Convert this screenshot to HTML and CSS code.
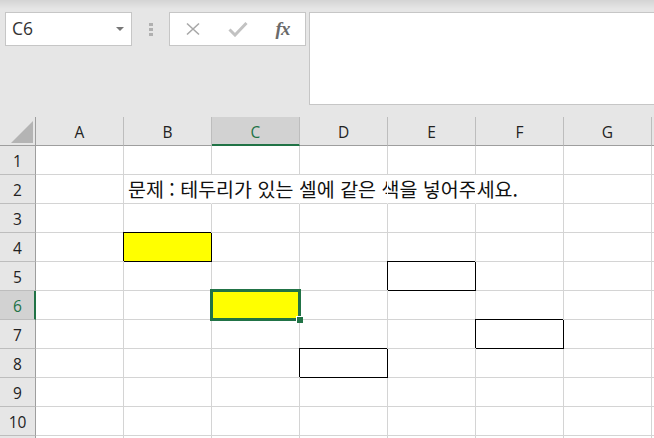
FILE: index.html
```html
<!DOCTYPE html>
<html lang="ko">
<head>
<meta charset="utf-8">
<title>Excel</title>
<link rel="stylesheet" href="styles.css">
</head>
<body>
<div class="app">
  <div class="toolbar">
    <div class="namebox"><span class="ref">C6</span><span class="caret"></span></div>
    <div class="grip"><i></i><i></i><i></i></div>
    <div class="fxbtns">
      <span class="btn"><svg width="16" height="14" viewBox="0 0 16 14"><path d="M2 1.5 L14 12.5 M14 1.5 L2 12.5" stroke="#a8a8a8" stroke-width="1.6" fill="none"/></svg></span>
      <span class="btn"><svg width="20" height="16" viewBox="0 0 20 16"><path d="M1.5 8.5 L7 14 L18.5 2" stroke="#c2c2c2" stroke-width="3" fill="none"/></svg></span>
      <span class="btn fx">fx</span>
    </div>
    <div class="formula"></div>
  </div>
  <div class="sheet">
    <div class="corner"><svg width="22" height="22" viewBox="0 0 22 22"><polygon points="22,0 22,22 0,22" fill="#b4b4b4"/></svg></div>
    <div class="ch">A</div><div class="ch">B</div><div class="ch sel">C</div><div class="ch">D</div><div class="ch">E</div><div class="ch">F</div><div class="ch">G</div><div class="ch"></div>

    <div class="rh">1</div><div class="c"></div><div class="c"></div><div class="c"></div><div class="c"></div><div class="c"></div><div class="c"></div><div class="c"></div><div class="c"></div>

    <div class="rh">2</div><div class="c"></div><div class="c nr title"><span>문제 : 테두리가 있는 셀에 같은 색을 넣어주세요.</span></div><div class="c nr"></div><div class="c nr"></div><div class="c nr"></div><div class="c"></div><div class="c"></div><div class="c"></div>

    <div class="rh">3</div><div class="c"></div><div class="c"></div><div class="c"></div><div class="c"></div><div class="c"></div><div class="c"></div><div class="c"></div><div class="c"></div>

    <div class="rh">4</div><div class="c"></div><div class="c box yellow"></div><div class="c"></div><div class="c"></div><div class="c"></div><div class="c"></div><div class="c"></div><div class="c"></div>

    <div class="rh">5</div><div class="c"></div><div class="c"></div><div class="c"></div><div class="c"></div><div class="c box"></div><div class="c"></div><div class="c"></div><div class="c"></div>

    <div class="rh sel">6</div><div class="c"></div><div class="c"></div><div class="c yellow active"><span class="handle"></span></div><div class="c"></div><div class="c"></div><div class="c"></div><div class="c"></div><div class="c"></div>

    <div class="rh">7</div><div class="c"></div><div class="c"></div><div class="c"></div><div class="c"></div><div class="c"></div><div class="c box"></div><div class="c"></div><div class="c"></div>

    <div class="rh">8</div><div class="c"></div><div class="c"></div><div class="c"></div><div class="c box"></div><div class="c"></div><div class="c"></div><div class="c"></div><div class="c"></div>

    <div class="rh">9</div><div class="c"></div><div class="c"></div><div class="c"></div><div class="c"></div><div class="c"></div><div class="c"></div><div class="c"></div><div class="c"></div>

    <div class="rh">10</div><div class="c"></div><div class="c"></div><div class="c"></div><div class="c"></div><div class="c"></div><div class="c"></div><div class="c"></div><div class="c"></div>

    <div class="rh"></div><div class="c"></div><div class="c"></div><div class="c"></div><div class="c"></div><div class="c"></div><div class="c"></div><div class="c"></div><div class="c"></div>
  </div>
</div>
</body>
</html>
```

FILE: styles.css
```css
* { box-sizing: border-box; }
html, body { margin: 0; padding: 0; }
body {
  width: 654px;
  height: 438px;
  overflow: hidden;
  background: #e6e6e6;
  font-family: "Open Sans", "Noto Sans", sans-serif;
  color: #222;
}
.app { width: 654px; height: 438px; overflow: hidden; }

.toolbar {
  display: flex;
  align-items: flex-start;
  height: 117px;
  padding: 12px 0 0 5px;
  background: linear-gradient(#d4d4d4 0px, #e6e6e6 9px);
}
.namebox {
  width: 127px;
  height: 34px;
  flex: none;
  border: 1px solid #c6c6c6;
  background: #fff;
  display: flex;
  align-items: center;
  justify-content: space-between;
  padding: 0 7px 0 6px;
}
.ref { font-size: 17.5px; color: #333; line-height: 1; }
.caret {
  width: 0; height: 0;
  border-left: 4px solid transparent;
  border-right: 4px solid transparent;
  border-top: 4px solid #777;
}
.grip {
  width: 37px;
  flex: none;
  display: flex;
  flex-direction: column;
  align-items: center;
  gap: 2px;
  padding-top: 11px;
}
.grip i { display: block; width: 4px; height: 3px; background: #b0b0b0; }
.fxbtns {
  width: 137px;
  height: 34px;
  flex: none;
  border: 1px solid #c6c6c6;
  background: #fff;
  display: flex;
  align-items: center;
}
.btn {
  width: 45px;
  height: 32px;
  display: flex;
  align-items: center;
  justify-content: center;
}
.btn svg { display: block; }
.fx {
  font-family: "Liberation Serif", "DejaVu Serif", serif;
  font-style: italic;
  font-weight: bold;
  font-size: 19px;
  color: #6a6a6a;
  letter-spacing: -1px;
}
.formula {
  flex: 1;
  height: 93px;
  margin-left: 3px;
  margin-right: -4px;
  border: 1px solid #c6c6c6;
  background: #fff;
}

.sheet {
  display: grid;
  grid-template-columns: 36px repeat(8, 88px);
  grid-auto-rows: 29px;
  width: max-content;
  background: #fff;
}
.corner {
  background: #e6e6e6;
  border-right: 1px solid #9e9e9e;
  border-bottom: 1px solid #9e9e9e;
  display: flex;
  align-items: flex-end;
  justify-content: flex-end;
  padding: 0 2px 2px 0;
}
.corner svg { display: block; }
.ch {
  background: #e6e6e6;
  border-right: 1px solid #bdbdbd;
  border-bottom: 1px solid #9e9e9e;
  font-size: 15.5px;
  display: flex;
  align-items: center;
  justify-content: center;
  padding-top: 1px;
}
.ch.sel {
  background: #d2d2d2;
  border-bottom: 2px solid #217346;
  color: #217346;
  padding-top: 2px;
}
.rh {
  background: #e6e6e6;
  border-right: 1px solid #9e9e9e;
  border-bottom: 1px solid #bdbdbd;
  font-size: 15.5px;
  display: flex;
  align-items: center;
  justify-content: center;
  padding-top: 1px;
}
.rh.sel {
  background: #d2d2d2;
  border-right: 2px solid #217346;
  color: #217346;
  padding-left: 1px;
}
.c {
  border-right: 1px solid #d4d4d4;
  border-bottom: 1px solid #d4d4d4;
}
.c.nr { border-right-color: #fff; }
.title {
  display: flex;
  align-items: flex-end;
  padding: 0 0 1px 4px;
  white-space: nowrap;
}
.title span {
  font-family: "Noto Sans CJK KR", "Noto Sans", sans-serif;
  font-size: 19.5px;
  line-height: 26px;
  color: #111;
}
.yellow { background: #ffff00; }
.box {
  border-right-color: #000;
  border-bottom-color: #000;
  box-shadow: -1px -1px 0 #000;
}
.active { position: relative; }
.active::after {
  content: "";
  position: absolute;
  left: -2px; top: -2px; right: -2px; bottom: -2px;
  border: 3px solid #217346;
  z-index: 1;
}
.handle {
  position: absolute;
  right: -4px;
  bottom: -4px;
  width: 7px;
  height: 7px;
  background: #217346;
  border-top: 1px solid #fff;
  border-left: 1px solid #fff;
  z-index: 2;
}
```
